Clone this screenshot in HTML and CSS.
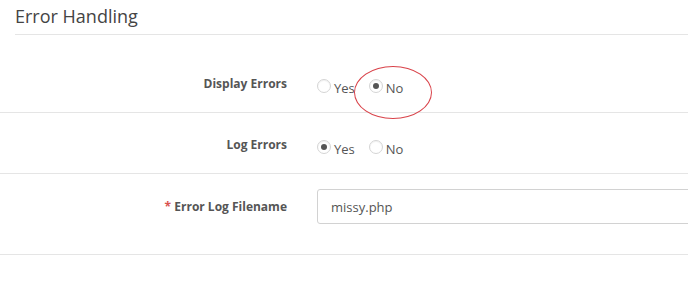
FILE: index.html
```html
<!DOCTYPE html>
<html lang="en">
<head>
<meta charset="UTF-8">
<title>Error Handling</title>
<link rel="stylesheet" href="styles.css">
</head>
<body>
<div class="panel">
	<h3 class="panel-title">Error Handling</h3>
	<div class="form-row first">
		<label class="row-label">Display Errors</label>
		<div class="radios">
			<span class="radio"><i class="dot"></i>Yes</span>
			<span class="radio checked"><i class="dot"></i>No<b class="mark"></b></span>
		</div>
	</div>
	<div class="form-row">
		<label class="row-label">Log Errors</label>
		<div class="radios">
			<span class="radio checked"><i class="dot"></i>Yes</span>
			<span class="radio"><i class="dot"></i>No</span>
		</div>
	</div>
	<div class="form-row last">
		<label class="row-label"><em>*</em> Error Log Filename</label>
		<div class="field">
			<input class="text-input" type="text" value="missy.php">
		</div>
	</div>
</div>
</body>
</html>
```

FILE: styles.css
```css
body {
	margin: 0;
	background: #fff;
	font-family: "Open Sans", "Noto Sans", sans-serif;
	color: #555;
}
.panel {
	overflow: hidden;
}
.panel-title {
	margin: 0 0 0 15px;
	padding: 6px 0 8px;
	font-size: 18px;
	font-weight: normal;
	line-height: 20px;
	color: #444;
	border-bottom: 1px solid #e5e5e5;
}
.form-row {
	display: grid;
	grid-template-columns: 287px 1fr;
	column-gap: 30px;
	align-items: start;
	padding: 22px 0 14px;
	border-bottom: 1px solid #e5e5e5;
}
.form-row.first {
	padding-top: 39px;
	padding-bottom: 14px;
}
.form-row.last {
	padding: 15px 0 30px;
	align-items: center;
}
.row-label {
	text-align: right;
	font-size: 12px;
	font-weight: bold;
	line-height: 20px;
	color: #555;
}
.row-label em {
	font-style: normal;
	color: #d9534f;
}
.radios {
	display: flex;
	gap: 14px;
	align-items: center;
	padding-top: 4px;
}
.radio {
	position: relative;
	display: flex;
	align-items: center;
	font-size: 13px;
	line-height: 20px;
}
.dot {
	position: relative;
	width: 14px;
	height: 14px;
	margin: -4px 3px 0 0;
	border: 1px solid #d5d5d5;
	border-radius: 50%;
	box-sizing: border-box;
	box-shadow: inset 0 1px 1px rgba(0, 0, 0, .06);
}
.checked .dot::after {
	content: "";
	position: absolute;
	left: 3px;
	top: 3px;
	width: 6px;
	height: 6px;
	border-radius: 50%;
	background: #555;
}
.mark {
	position: absolute;
	left: -15px;
	top: -12px;
	width: 76px;
	height: 51px;
	border: 1px solid #d9434a;
	border-radius: 50%;
	pointer-events: none;
}
.field {
	min-width: 0;
}
.text-input {
	display: block;
	width: calc(100% + 20px);
	height: 35px;
	padding: 0 13px;
	box-sizing: border-box;
	border: 1px solid #d2d2d2;
	border-radius: 3px;
	font: 13px "Open Sans", "Noto Sans", sans-serif;
	color: #555;
	background: #fff;
}
```
